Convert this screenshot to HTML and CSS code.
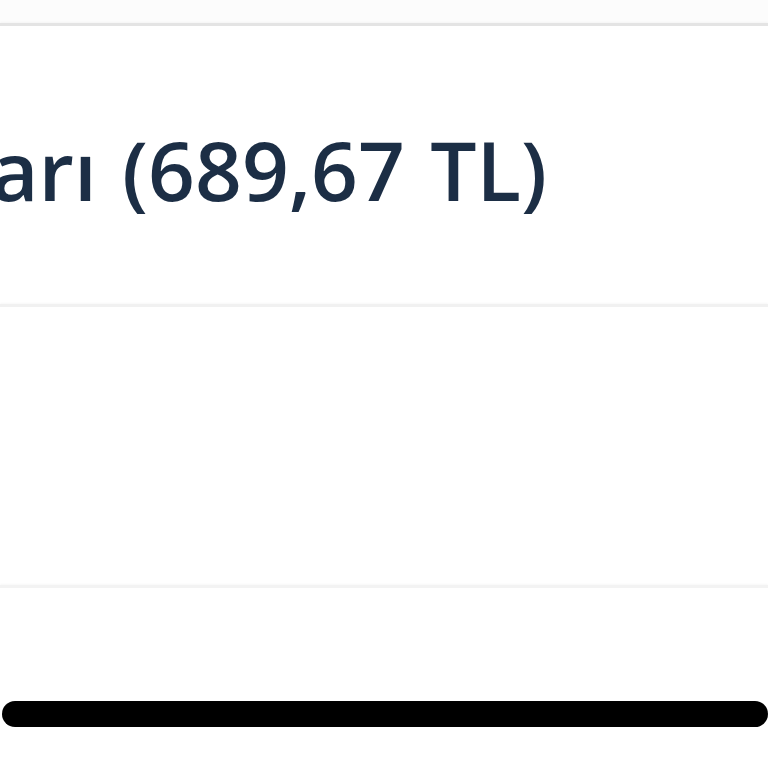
FILE: index.html
```html
<!DOCTYPE html>
<html lang="tr">
<head>
    <meta charset="UTF-8">
    <meta name="viewport" content="width=device-width, initial-scale=1.0">
    <title>Ödeme</title>
    <link rel="stylesheet" href="styles.css">
</head>
<body>
    <div class="screen">
        <div class="top-strip"></div>
        <div class="row amount-row">
            <div class="amount">arı (689,67 TL)</div>
        </div>
        <div class="row empty-row"></div>
        <div class="row bottom-row">
            <div class="home-indicator"></div>
        </div>
    </div>
</body>
</html>
```
FILE: styles.css
```css
* {
    margin: 0;
    padding: 0;
    box-sizing: border-box;
}

body {
    background: #ffffff;
    font-family: 'Open Sans', 'Noto Sans', sans-serif;
    overflow: hidden;
}

.screen {
    width: 768px;
    height: 768px;
    display: flex;
    flex-direction: column;
}

.top-strip {
    height: 23px;
    background: #fcfcfc;
}

.row {
    border-top: 3px solid #e8e8e8;
    box-shadow: 0 -1px 2px rgba(0, 0, 0, 0.03);
}

.amount-row {
    height: 281px;
    display: flex;
    align-items: center;
    overflow: hidden;
    border-top-color: #e4e4e4;
}

.amount {
    font-size: 82px;
    font-weight: 600;
    color: #1c2e45;
    white-space: nowrap;
    margin-left: -9px;
    margin-top: 8px;
    word-spacing: 4px;
}

.empty-row {
    height: 281px;
    border-top-color: #f1f1f1;
}

.bottom-row {
    flex: 1;
    border-top-color: #f3f3f3;
    padding-top: 113px;
}

.home-indicator {
    height: 26px;
    margin-left: 2px;
    background: #000000;
    border-radius: 13px;
}
```
